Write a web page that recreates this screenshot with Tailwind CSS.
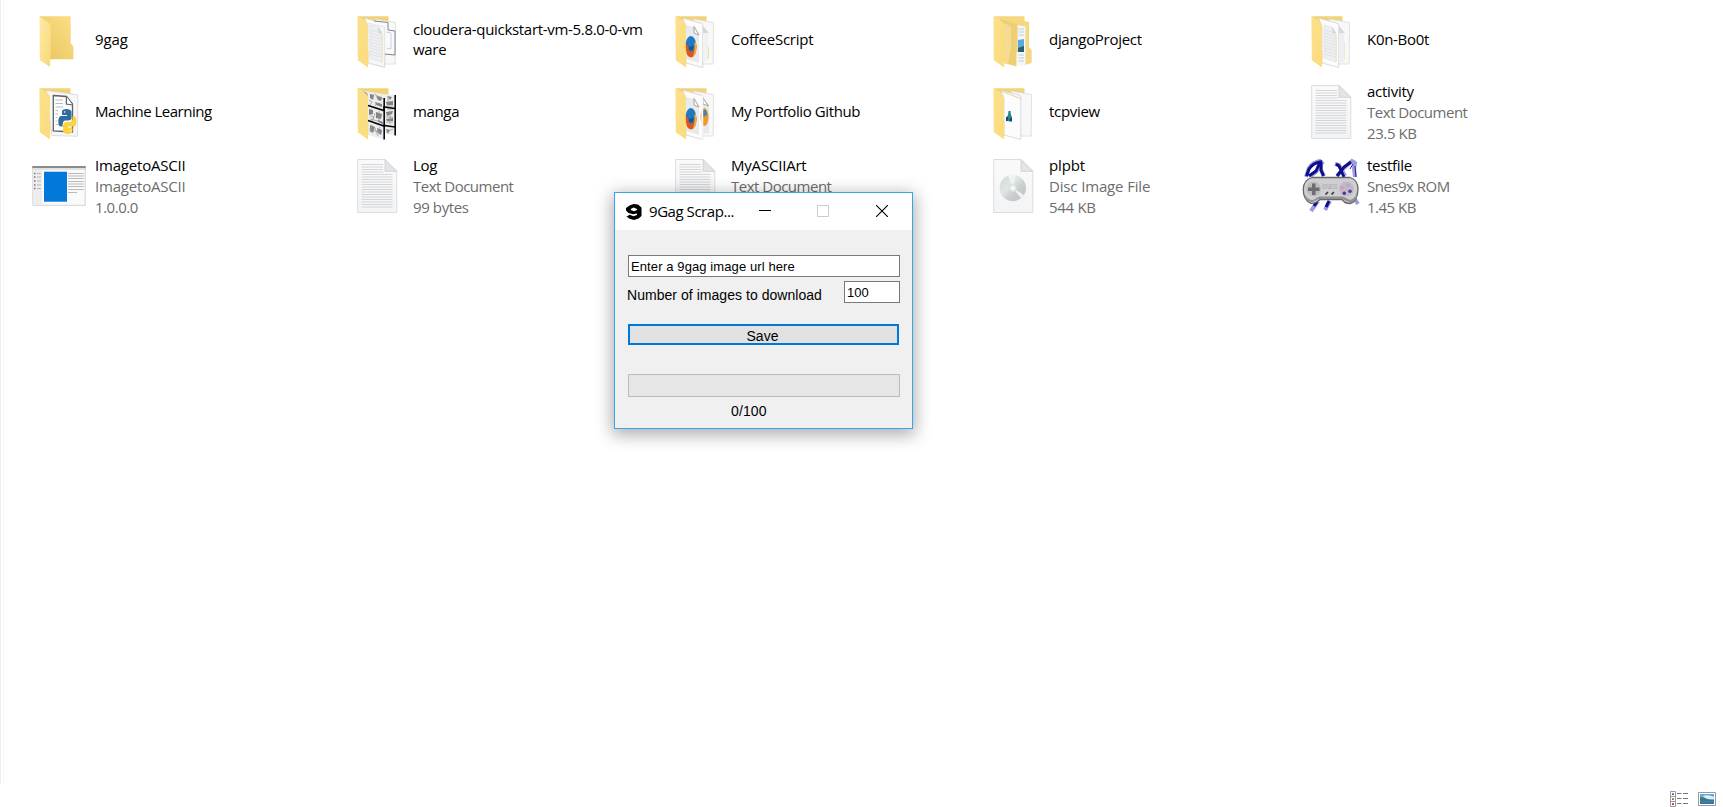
<!DOCTYPE html>
<html lang="en">
<head>
<meta charset="utf-8">
<title>File Explorer</title>
<script src="https://cdn.jsdelivr.net/npm/@tailwindcss/browser@4"></script>
</head>
<body class="relative h-[807px] w-[1723px] overflow-hidden bg-white font-['Open_Sans',sans-serif] text-[15px] text-black">
<svg class="absolute size-0">
  <defs>
    <linearGradient id="gBack" x1="0" x2="1" y1="1" y2="0"><stop offset="0" stop-color="#eac45c"/><stop offset="1" stop-color="#fbdf87"/></linearGradient>
    <linearGradient id="gFlap" x1="0" x2="1" y1="0" y2="1"><stop offset="0" stop-color="#ffeaa8"/><stop offset="1" stop-color="#f8d978"/></linearGradient>
    <linearGradient id="gFull" x1="0" x2="1" y1="0" y2="1"><stop offset="0" stop-color="#fbe08c"/><stop offset="1" stop-color="#fbdc7c"/></linearGradient>
    <linearGradient id="gDisc" x1="0" x2="1" y1="0" y2="1"><stop offset="0" stop-color="#d2d5d7"/><stop offset=".4" stop-color="#dfe7e4"/><stop offset=".6" stop-color="#cdd0d2"/><stop offset="1" stop-color="#b9bdc0"/></linearGradient>
    <linearGradient id="gDoc" x1="0" x2="0" y1="0" y2="1"><stop offset="0" stop-color="#fafafa"/><stop offset="1" stop-color="#f3f4f6"/></linearGradient>
    <symbol id="back" viewBox="0 0 54 56"><path d="M7.5 4.2H38.5V12H18z" fill="#f3d276"/></symbol>
    <symbol id="front" viewBox="0 0 54 56"><path d="M7.4 4.2 16 9.5Q18 11 18 15L17.7 36 18.6 41 18 55.6 7.8 48.3Z" fill="url(#gFull)"/></symbol>
    <symbol id="doc" viewBox="0 0 54 56">
      <path d="M7.7 1.5H35L46.8 13.3V54.5H7.7Z" fill="url(#gDoc)" stroke="#dcdde0"/>
      <path d="M35 1.5V13.3H46.8Z" fill="#e3e4e7" stroke="#cccdd0" stroke-width=".8"/>
    </symbol>
    <symbol id="textdoc" viewBox="0 0 54 56">
      <use href="#doc" width="54" height="56"/>
      <path d="M11.5 6.5H33M11.5 9H33M11.5 11.5H33M11.5 14H34M11.5 16.5H42.5M11.5 19H42.5M11.5 21.5H42.5M11.5 24H42.5M11.5 26.5H42.5M11.5 29H42.5M11.5 31.5H42.5M11.5 34H42.5M11.5 36.5H42.5M11.5 39H42.5M11.5 41.5H42.5M11.5 44H42.5M11.5 46.5H42.5M11.5 49H42.5" stroke="#cfd1d5" stroke-width=".9"/>
    </symbol>
    <symbol id="fox" viewBox="0 0 16 26" preserveAspectRatio="none">
      <ellipse cx="7.5" cy="13" rx="6.5" ry="11.5" fill="#2079c4"/>
      <path d="M1 7C0 16 2 24.5 8 24.8 13 24.5 15.5 17 13.3 7.5 12.7 12 12 17 9 18.5 6 19.5 4.5 16 5.5 13.5 3.5 13 2 11 1 7Z" fill="#dd5520"/>
      <path d="M13.3 7.5C15.5 17 13 22.5 9.5 24 12 20 12.6 13 11.5 10Z" fill="#f6ae2c"/>
      <path d="M5 13c2 0 4 0 5-2l1 3c-1 4-4 4-6 2Z" fill="#1b5795"/>
    </symbol>
    <symbol id="pages" viewBox="0 0 54 56">
      <path d="M25 7 45.5 10.6 45.2 52 33 52Z" fill="#f8f8f9" stroke="#dadadc" stroke-width=".8"/>
      <path d="M14.5 6 34 11.5Q34.8 12 34.8 13V55.5L18 51 18 15Z" fill="#fcfcfd" stroke="#d2d2d5" stroke-width=".8"/>
    </symbol>
    <symbol id="lines" viewBox="0 0 54 56">
      <path d="M20 13 28.5 15.5 32 21V50L20 46Z" fill="#eeeff1" stroke="#dadbdd" stroke-width=".6"/>
      <path d="M20 18 28 20M20 21 31 24M20 24 31 27M20 27 31 30M20 30 31 33M20 33 31 36M20 36 31 39M20 39 31 42M20 42 31 45" stroke="#dfe1e4" stroke-width=".9"/>
      <path d="M28.5 15.5V21L32 22Z" fill="#d0d1d3"/>
      <path d="M32.4 24V50" stroke="#f0e5b8" stroke-width=".8"/>
    </symbol>
  </defs>
</svg>

<main class="flex h-[784px]">
  <div class="h-full w-px bg-[#f0f0f0]"></div>
  <div class="ml-[2px] h-full w-px bg-[#f7f7f7]"></div>
  <div class="ml-[28px] grid grid-cols-[repeat(5,318px)] grid-rows-[72px_72px_76px] content-start pt-[4px] whitespace-nowrap">

    <div class="flex items-center gap-[9px]">
      <svg class="h-[56px] w-[54px] shrink-0" viewBox="0 0 54 56"><path d="M7.5 4.2H38.7V31.5L41.4 34.5V47.3H17Z" fill="url(#gBack)"/><path d="M7.5 4.2 17.5 11.8Q18.7 12.7 18.7 15V41L18 55 7.8 48Z" fill="url(#gFlap)"/></svg>
      <p class="pb-[2px] tracking-[-0.1px]">9gag</p>
    </div>

    <div class="flex items-center gap-[9px]">
      <svg class="h-[56px] w-[54px] shrink-0" viewBox="0 0 54 56"><use href="#back"/><use href="#pages"/><path d="M24 9 38 10.5 38 18 45 19V43L34.5 42" fill="#fafafa" stroke="#77787a" stroke-width=".9"/><path d="M36 20 41 21V37L36 36" fill="none" stroke="#b8cce3" stroke-width=".8"/><path d="M18 11 34.5 15V55L18 51Z" fill="#f6f6f7" stroke="#d8d8da" stroke-width=".6"/><use href="#lines"/><use href="#front"/></svg>
      <p class="pb-[2px] leading-[20px] tracking-[-0.31px]">cloudera-quickstart-vm-5.8.0-0-vm<br>ware</p>
    </div>

    <div class="flex items-center gap-[9px]">
      <svg class="h-[56px] w-[54px] shrink-0" viewBox="0 0 54 56"><use href="#back"/><use href="#pages"/><path d="M35 13 40 20V49H35" fill="#f2f2f3"/><path d="M35 14 41 21H35Z" fill="#d7d7d8"/><path d="M40.5 35V47" stroke="#efe29d"/><path d="M18 13 27 15 31 22V51L18 47Z" fill="#e9eaec"/><path d="M26 14.5V21L31 23Z" fill="#fff" stroke="#929396" stroke-width=".8"/><use href="#fox" x="16.500" y="22.500" width="13.500" height="24"/><use href="#front"/></svg>
      <p class="pb-[2px] tracking-[-0.25px]">CoffeeScript</p>
    </div>

    <div class="flex items-center gap-[9px]">
      <svg class="h-[56px] w-[54px] shrink-0" viewBox="0 0 54 56"><path d="M7.5 4.2H38.5V9L43 10V35L45.7 38V51L39 53V15L18 11Z" fill="#f5d77e"/><path d="M31 13 39.5 14.5V54L31 53Z" fill="#f4f6f9"/><path d="M32.5 17H38M32.5 20H38M32.5 23H38M32.5 43H38M32.5 46H38M32.5 49H38" stroke="#b7c1d0" stroke-width=".8"/><path d="M32 28 38 27V35L32 38Z" fill="#5ca9dc"/><path d="M32 36 38 34V40H32Z" fill="#275f75"/><path d="M14 7 31.6 12V39L30.5 41V54.5L18 51Z" fill="#efcf73"/><path d="M18 11 25 15V36L22 52 18 51Z" fill="#f6dc91"/><use href="#front"/></svg>
      <p class="pb-[2px] tracking-[-0.3px]">djangoProject</p>
    </div>

    <div class="flex items-center gap-[9px]">
      <svg class="h-[56px] w-[54px] shrink-0" viewBox="0 0 54 56"><use href="#back"/><use href="#pages"/><path d="M35 14 40 20V50H35Z" fill="#eeeff1"/><path d="M35 14 41 21H35Z" fill="#d7d7d8"/><path d="M40.5 30V47" stroke="#efe6b8" stroke-width=".8"/><use href="#lines"/><use href="#front"/></svg>
      <p class="pb-[2px] tracking-[-0.3px]">K0n-Bo0t</p>
    </div>

    <div class="flex items-center gap-[9px]">
      <svg class="h-[56px] w-[54px] shrink-0" viewBox="0 0 54 56"><use href="#back"/><path d="M14.5 6.5 45.8 10.8 45.4 52.3 20 51.5Z" fill="#f7f7f8" stroke="#d5d5d7" stroke-width=".8"/><path d="M21.3 11.5 34.5 12.5 40.5 20V48L21.3 47Z" fill="#fdfdfd" stroke="#5d5f62" stroke-width="1.3"/><path d="M34.5 12.5 34.3 20 40.5 21" fill="#fff" stroke="#5d5f62" stroke-width="1.2"/><path d="M23.5 16H31M23.5 19.5H31M23.5 23H31M23.5 26.5H26M23.5 30H26M23.5 33.5H25M23.5 37H25M23.5 40.5H29" stroke="#a9abad" stroke-width=".8"/><path d="M30 27Q30.500 25 34.5 25 38.5 25.200 39.500 27.5V34Q39 36.5 36 36.5H33Q30.500 37 30.500 42.5H28.5Q26.3 42 26.3 37 26.5 32.5 29 32H35V31H30Z" fill="#316c9f"/><path d="M40.500 32H42Q44.5 33 44.5 37 44.5 42 42 42.6H36V43.5H40.5V47Q40 50 36 50 31.5 50 31 47V41.5Q31.5 38 34 38H37.5Q40.500 37.500 40.500 35Z" fill="#fcd241"/><circle cx="32.7" cy="28" r=".8" fill="#fff"/><circle cx="38.5" cy="46.8" r=".8" fill="#fff"/><use href="#front"/></svg>
      <p class="pb-[2px] tracking-[-0.5px]">Machine Learning</p>
    </div>

    <div class="flex items-center gap-[9px]">
      <svg class="h-[56px] w-[54px] shrink-0" viewBox="0 0 54 56"><use href="#back"/><path d="M11 6.5 34 10 45 11V51L34.5 50V55.5L18 51Z" fill="#ededed"/><path d="M12 7 17 9 18 13 14 9M20 10 24 11 23 16 20 14M26 12 32 13 31 17 28 16M25 18 32 20V23L26 21M37 12 42 13 40 16M36 18 43 17V21H37M19 25 23 26V30L19 31M26 28 32 30 31 35 26 34M28 36 33 38V40L28 38M36 28 43 27 42 30 37 32M36 35 43 34V37H37M20 41 25 43 23 49 20 47M27 44 32 46 31 51 28 49M36 45 40 46 38 50M41 45 43 49" fill="#666" opacity=".8"/><path d="M24 10 33 15M19 16 22 18 20 21M27 19 25 22M29 27V37M20 32 24 33 22 37M25 29 23 35M36 22H43M38 13V19M37 25H43M36 33H43M36 38H43M40 27V40M19 45 32 49M22 41 20 48M25 44 28 52M36 48 43 45M30 43 27 48M20 35 32 38" fill="none" stroke="#999" stroke-width=".8"/><path d="M18 21.500 34 26.500V23L45 24.500M18 36.500 34 42V41.500L45 43" fill="none" stroke="#080808" stroke-width="1.7"/><path d="M34.2 14V55.5M45.200 11V51.500" stroke="#080808" stroke-width="1.6"/><use href="#front"/></svg>
      <p class="pb-[2px] tracking-[-0.35px]">manga</p>
    </div>

    <div class="flex items-center gap-[9px]">
      <svg class="h-[56px] w-[54px] shrink-0" viewBox="0 0 54 56"><use href="#back"/><use href="#pages"/><path d="M35 13 41 21V49L35 50Z" fill="#e8e9eb"/><path d="M35 14V20L40.5 22Z" fill="#fff" stroke="#929396" stroke-width=".8"/><ellipse cx="36.5" cy="33" rx="4" ry="9" fill="#e99b2c"/><path d="M35 26Q39 25 39 31L35 33Z" fill="#4287ae"/><path d="M34.2 12V55.5" stroke="#f7f7f7" stroke-width="2"/><path d="M18 13 27 15 31 22V51L18 47Z" fill="#e9eaec"/><path d="M26 14.5V21L31 23Z" fill="#fff" stroke="#929396" stroke-width=".8"/><use href="#fox" x="16.500" y="22.500" width="13.500" height="24"/><use href="#front"/></svg>
      <p class="pb-[2px] tracking-[-0.4px]">My Portfolio Github</p>
    </div>

    <div class="flex items-center gap-[9px]">
      <svg class="h-[56px] w-[54px] shrink-0" viewBox="0 0 54 56"><use href="#back"/><use href="#pages"/><path d="M14.5 7 34.7 14.5" stroke="#e5d497"/><path d="M22.5 27H24.5L25 31 26 33V37H20V34L22 31Z" fill="#258a86"/><path d="M20 33H22V37H20ZM24 34H26V37.5H23Z" fill="#24437f"/><use href="#front"/></svg>
      <p class="pb-[2px] tracking-[-0.3px]">tcpview</p>
    </div>

    <div class="flex items-center gap-[9px]">
      <svg class="h-[56px] w-[54px] shrink-0"><use href="#textdoc" width="54" height="56"/></svg>
      <div class="leading-[21px] tracking-[-0.5px] text-[#6d6d6d]"><p class="tracking-[-0.25px] text-black">activity</p><p>Text Document</p><p class="tracking-[-0.4px]">23.5 KB</p></div>
    </div>

    <div class="flex items-center gap-[9px]">
      <svg class="h-[56px] w-[54px] shrink-0" viewBox="0 0 54 56"><path d="M.8 8.5H53.2V47.3H.8Z" fill="#fafafa" stroke="#d3d3d3"/><path d="M.3 8H53.7V10.3H.3Z" fill="#8b8b8b"/><path d="M1.3 10.3H52.7V12H1.3Z" fill="#e2e2e2"/><path d="M1.3 12H10V46.8H1.3Z" fill="#ededee"/><path d="M12 13.7H35V43.7H12Z" fill="#0279da"/><path d="M2 15.5H3.5M2 19H3.5M2 23H3.5M2 27H3.5M2 30.5H3.5" stroke="#777" stroke-width="1.5"/><path d="M5 15.5H9M5 19H9M5 23H9M5 27H9M5 30.5H9" stroke="#b6b6b6"/><path d="M36 15.5H51.7M36 18H51.7M36 20.5H51.7M36 23.5H51.7M36 26H51.7M36 28.5H51.7M36 31.5H51.7M36 34.5H45" stroke="#b9b9ba"/></svg>
      <div class="leading-[21px] tracking-[-0.2px] text-[#6d6d6d]"><p class="text-black">ImagetoASCII</p><p>ImagetoASCII</p><p class="tracking-[-0.45px]">1.0.0.0</p></div>
    </div>

    <div class="flex items-center gap-[9px]">
      <svg class="h-[56px] w-[54px] shrink-0"><use href="#textdoc" width="54" height="56"/></svg>
      <div class="leading-[21px] tracking-[-0.5px] text-[#6d6d6d]"><p class="tracking-[-0.3px] text-black">Log</p><p>Text Document</p><p class="tracking-[-0.4px]">99 bytes</p></div>
    </div>

    <div class="flex items-center gap-[9px]">
      <svg class="h-[56px] w-[54px] shrink-0"><use href="#textdoc" width="54" height="56"/></svg>
      <div class="leading-[21px] tracking-[-0.5px] text-[#6d6d6d]"><p class="tracking-[-0.2px] text-black">MyASCIIArt</p><p>Text Document</p><p>&nbsp;</p></div>
    </div>

    <div class="flex items-center gap-[9px]">
      <svg class="h-[56px] w-[54px] shrink-0" viewBox="0 0 54 56"><use href="#doc" width="54" height="56"/><circle cx="26.8" cy="30" r="13.2" fill="url(#gDisc)"/><path d="M26.8 30 22 17.8A13 13 0 0 1 30 17.2ZM26.8 30 38 37A13 13 0 0 1 35 40.2Z" fill="#edf5f1"/><circle cx="26.8" cy="30" r="3.8" fill="#e9eaeb" stroke="#d2d4d5" stroke-width=".6"/><circle cx="26.8" cy="30" r="1.5" fill="#fff"/></svg>
      <div class="leading-[21px] tracking-[-0.15px] text-[#6d6d6d]"><p class="text-black">plpbt</p><p>Disc Image File</p><p class="tracking-[-0.3px]">544 KB</p></div>
    </div>

    <div class="flex items-center gap-[9px]">
      <svg class="h-[56px] w-[54px] shrink-0 overflow-visible" viewBox="0 0 54 56">
        <path d="M2 19 5 10Q9 4 16 3L18 5 12 14 6 18M17 6 17 12 20 18M31 6 35 7 41 18M33 18 40 10 48 3 51 5 50 10 51 19M14 43 7 53M26 43 21 52M40 44 50 40 54 46" fill="none" stroke="#9c9cdb" stroke-width="4"/>
        <path d="M2.500 18 5 11Q9 5 16 4L12 13 5 18M17 4 17 12 19.500 18M32 6 35 8 40 19M33 18 40 9 47 4M13 44 10 48M25 43 22 49" fill="none" stroke="#0c0c8c" stroke-width="2.9"/>
        <path d="M51 8 52 19M49 6 46 11" stroke="#2424a0" stroke-width="1"/>
        <path d="M8 19.5H46Q54 22 54 31 53.5 44 46 45.5 41 45.5 38 41.5H16Q12 45.5 7 45.3-1 42-.7 31-.5 22 8 19.5Z" fill="#cfcfd2" stroke="#66666a" stroke-width="1.3"/>
        <path d="M1 36Q4 42.500 9 42L15 38.500H39L46 42Q52 40 53 34L53 39Q50 45 46 44.5L38 41H15L8 44Q2 43 1 36Z" fill="#909096"/>
        <circle cx="9.7" cy="31" r="7.5" fill="#bdbdc0"/><circle cx="42.5" cy="31" r="7.5" fill="#bdbcc5"/>
        <path d="M8 25.5H11.5V29.5H15.5V33H11.5V37H8V33H4V29.5H8Z" fill="#6d6d72"/>
        <circle cx="38" cy="29.5" r="2" fill="#d398cf"/><circle cx="44" cy="27.3" r="2" fill="#d398cf"/><circle cx="40.3" cy="35.3" r="1.7" fill="#57319a"/><circle cx="46" cy="33.3" r="1.8" fill="#66349c"/>
        <path d="M21.5 36.5 24 34M27.5 36.5 30 34" stroke="#38383d" stroke-width="1.6"/>
        <text x="17.5" y="30.5" font-family="Liberation Sans" font-size="6.5" fill="#aaaab0" textLength="16">SNES</text>
      </svg>
      <div class="leading-[21px] tracking-[-0.5px] text-[#6d6d6d]"><p class="tracking-[-0.3px] text-black">testfile</p><p>Snes9x ROM</p><p>1.45 KB</p></div>
    </div>
  </div>
</main>

<footer class="flex h-[23px] items-start justify-end gap-[10px] pt-[7px] pr-[7px]">
  <svg class="h-[16px] w-[18px]" viewBox="0 0 18 16"><path d="M.5.5H5.5V15.5H.5ZM.5 5.5H5.5M.5 10.5H5.5" fill="#fff" stroke="#9a9a9a"/><path d="M2 2.2H4V4H2Z" fill="#2d8197"/><path d="M2 7.2H4V9H2Z" fill="#85803a"/><path d="M2 12.2H4V14H2Z" fill="#c43522"/><path d="M7 2.5H11.5M13 2.5H18M7 7.5H11.5M13 7.5H18M7 12.5H11.5M13 12.5H18" stroke="#777"/></svg>
  <svg class="mt-px h-[14px] w-[18px]" viewBox="0 0 18 14"><path d="M.5.5H17.5V13.5H.5Z" fill="#fff" stroke="#999"/><path d="M2 2H16V12H2Z" fill="#69a9df"/><path d="M5 4Q10 2 16 5V7H8Z" fill="#dceefa"/><path d="M2 5 7 6 12 8H16V9.5H2Z" fill="#3e7775"/><path d="M2 9.5H16V12H2Z" fill="#3475ae"/></svg>
</footer>

<section class="absolute top-[192px] left-[614px] flex h-[237px] w-[299px] flex-col border border-[#35a5ee] bg-[#f0f0f0] shadow-[0_4px_16px_2px_rgba(0,0,0,0.32)]">
  <header class="flex h-[37px] shrink-0 items-center bg-white pl-[11px]">
    <svg class="h-[16px] w-[16px]" viewBox="0 0 16 16"><path d="M3.5 1.5 7.5 0 12 .5 15.5 3.5V12L12.5 14.5 8 16 3.5 14.8.5 12.5 3.8 10.7 7.5 12.3 11 11V9.5L7 10.3 2.5 9 0 6.5V4Z" fill="#000"/><path d="M4.8 5 7.5 3.6 11 5V6L8 7.3 4.8 6Z" fill="#fff"/></svg>
    <h1 class="ml-[7px] w-[110px] tracking-[-0.45px] whitespace-nowrap">9Gag Scrap...</h1>
    <svg class="-mt-[2px] h-[12px] w-[12px]" viewBox="0 0 12 12"><path d="M0 5.5H12" stroke="#000"/></svg>
    <svg class="-mt-px ml-[46px] h-[12px] w-[12px]" viewBox="0 0 12 12"><path d="M.5.5H11.5V11.5H.5Z" fill="none" stroke="#ccc"/></svg>
    <svg class="-mt-px ml-[47px] h-[12px] w-[12px]" viewBox="0 0 12 12"><path d="M0 0 12 12M12 0 0 12" stroke="#000" stroke-width="1.1"/></svg>
  </header>
  <div class="flex flex-col pt-[25px] pr-[12px] pl-[13px] font-['Liberation_Sans',sans-serif] text-[14px] leading-[20px]">
    <div class="h-[22px] border border-[#7a7a7a] bg-white pl-[2px] text-[13px] leading-[21px] tracking-[0.1px] whitespace-nowrap">Enter a 9gag image url here</div>
    <div class="mt-[4px] flex h-[22px] justify-between">
      <span class="-ml-px pt-[4px] tracking-[0.04px] whitespace-nowrap">Number of images to download</span>
      <div class="h-[22px] w-[56px] border border-[#7a7a7a] bg-white pl-[2px] text-[13px] leading-[21px]">100</div>
    </div>
    <div class="mt-[21px] flex h-[21px] w-[271px] items-center justify-center border-2 border-[#0078d7] bg-[#e1e1e1] pt-[3px] pr-[2px]">Save</div>
    <div class="mt-[29px] h-[23px] border border-[#bcbcbc] bg-[#e6e6e6]"></div>
    <div class="mt-[4px] pl-[103px] tracking-[0.1px]">0/100</div>
  </div>
</section>
</body>
</html>
